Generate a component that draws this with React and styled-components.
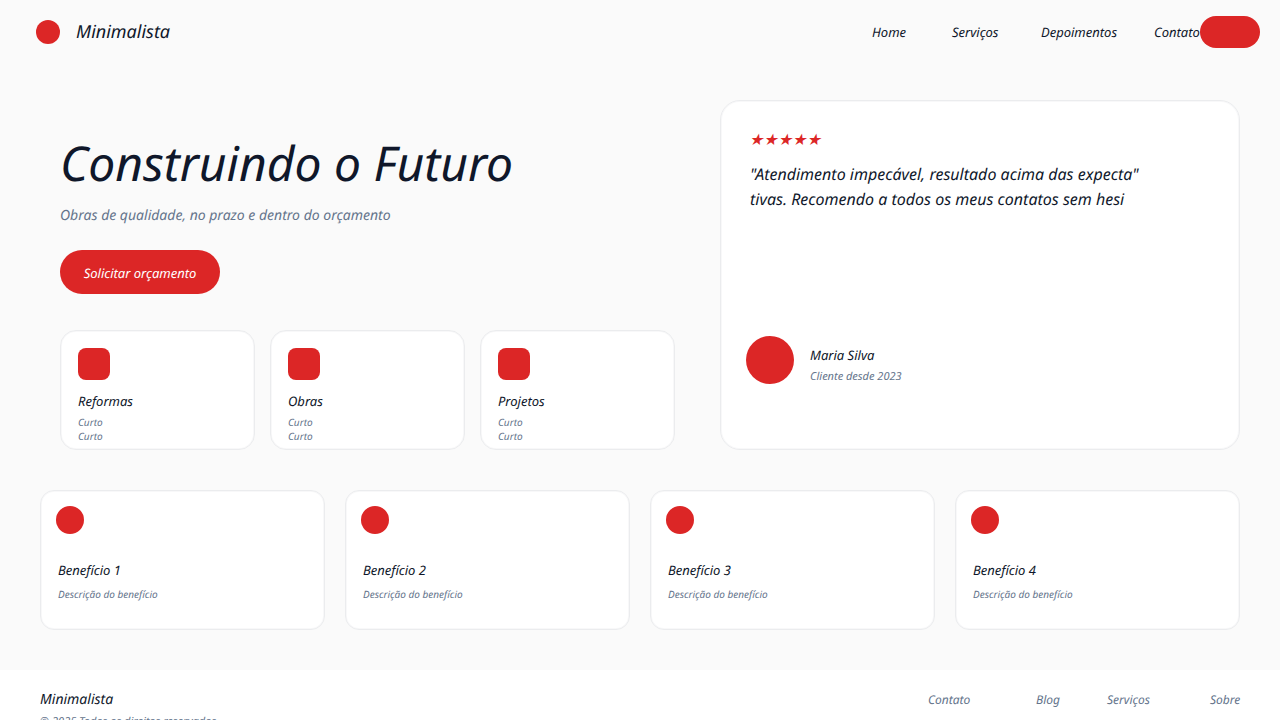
import styled, { createGlobalStyle } from 'styled-components';

const GlobalStyle = createGlobalStyle`
  * { box-sizing: border-box; }
  html, body { margin: 0; height: 720px; overflow: hidden; }
  body {
    background: #fafafa;
    color: #0f172a;
    font-family: "Noto Sans", sans-serif;
    font-style: italic;
    text-rendering: geometricPrecision;
  }
`;

const services = ['Reformas', 'Obras', 'Projetos'];
const benefits = ['Benefício 1', 'Benefício 2', 'Benefício 3', 'Benefício 4'];

const App = () => (
  <>
    <GlobalStyle />
    <Header>
      <Brand>
        <BrandDot />
        <BrandName>Minimalista</BrandName>
      </Brand>
      <Nav>
        <NavLink $width={80}>Home</NavLink>
        <NavLink $width={89}>Serviços</NavLink>
        <NavLink $width={113}>Depoimentos</NavLink>
        <NavLink $width={46}>Contato</NavLink>
        <NavButton />
      </Nav>
    </Header>
    <Hero>
      <HeroLeft>
        <Title>Construindo o Futuro</Title>
        <Subtitle>Obras de qualidade, no prazo e dentro do orçamento</Subtitle>
        <Cta>Solicitar orçamento</Cta>
        <Services>
          {services.map(name => (
            <ServiceCard key={name}>
              <ServiceIcon />
              <ServiceName>{name}</ServiceName>
              <ServiceText>Curto<br />Curto</ServiceText>
            </ServiceCard>
          ))}
        </Services>
      </HeroLeft>
      <Testimonial>
        <Stars>★★★★★</Stars>
        <Quote>"Atendimento impecável, resultado acima das expecta"<br />tivas. Recomendo a todos os meus contatos sem hesi</Quote>
        <Author>
          <Avatar />
          <AuthorInfo>
            <AuthorName>Maria Silva</AuthorName>
            <AuthorNote>Cliente desde 2023</AuthorNote>
          </AuthorInfo>
        </Author>
      </Testimonial>
    </Hero>
    <Benefits>
      {benefits.map(name => (
        <BenefitCard key={name}>
          <BenefitDot />
          <BenefitName>{name}</BenefitName>
          <BenefitText>Descrição do benefício</BenefitText>
        </BenefitCard>
      ))}
    </Benefits>
    <Footer>
      <div>
        <FooterBrand>Minimalista</FooterBrand>
        <Copyright>© 2025 Todos os direitos reservados</Copyright>
      </div>
      <FooterNav>
        <FooterLink $width={108}>Contato</FooterLink>
        <FooterLink $width={71}>Blog</FooterLink>
        <FooterLink $width={103}>Serviços</FooterLink>
        <FooterLink $width={30}>Sobre</FooterLink>
      </FooterNav>
    </Footer>
  </>
);

export default App;

const Header = styled.header`
  height: 64px;
  padding: 0 20px 0 36px;
  display: flex;
  align-items: center;
  justify-content: space-between;
`;

const Brand = styled.div`
  display: flex;
  align-items: center;
  gap: 16px;
`;

const BrandDot = styled.div`
  width: 24px;
  height: 24px;
  border-radius: 50%;
  background: #dc2626;
`;

const BrandName = styled.span`
  font-size: 18px;
`;

const Nav = styled.nav`
  display: flex;
  align-items: center;
`;

const NavLink = styled.a`
  width: ${p => p.$width}px;
  font-size: 13px;
`;

const NavButton = styled.button`
  width: 60px;
  height: 32px;
  border: none;
  border-radius: 16px;
  background: #dc2626;
`;

const Hero = styled.section`
  height: 386px;
  padding: 36px 40px 0;
  display: flex;
  justify-content: space-between;
`;

const HeroLeft = styled.div`
  width: 636px;
  padding: 0 0 0 20px;
`;

const Title = styled.h1`
  margin: 31px 0 0;
  font-size: 48px;
  font-weight: 400;
  line-height: 66px;
`;

const Subtitle = styled.p`
  margin: 9px 0 0;
  font-size: 14px;
  line-height: 20px;
  color: #64748b;
`;

const Cta = styled.button`
  display: block;
  margin-top: 24px;
  padding-top: 2px;
  width: 160px;
  height: 44px;
  border: none;
  border-radius: 22px;
  background: #dc2626;
  color: #fff;
  font: italic 13px "Noto Sans", sans-serif;
  text-rendering: geometricPrecision;
`;

const Services = styled.div`
  margin-top: 36px;
  display: flex;
  gap: 15px;
`;

const ServiceCard = styled.div`
  width: 195px;
  height: 120px;
  padding: 17px 17px 0;
  background: #fff;
  border: 1px solid #ebecee;
  box-shadow: inset 0 0 0 1px #f8f8f9;
  border-radius: 16px;
`;

const ServiceIcon = styled.div`
  width: 32px;
  height: 32px;
  border-radius: 8px;
  background: #dc2626;
`;

const ServiceName = styled.div`
  margin-top: 12px;
  font-size: 13px;
  line-height: 18px;
`;

const ServiceText = styled.div`
  margin-top: 5px;
  font-size: 10px;
  line-height: 14px;
  color: #64748b;
`;

const Testimonial = styled.aside`
  width: 520px;
  height: 350px;
  padding: 28px 29px 0;
  background: #fff;
  border: 1px solid #ebecee;
  box-shadow: inset 0 0 0 1px #f8f8f9;
  border-radius: 20px;
`;

const Stars = styled.div`
  margin-left: -1px;
  color: #dc2626;
  font-size: 16px;
  line-height: 20px;
`;

const Quote = styled.p`
  margin: 13px 0 0;
  font-size: 16px;
  line-height: 25px;
`;

const Author = styled.div`
  margin: 124px 0 0 -4px;
  display: flex;
  align-items: flex-start;
  gap: 16px;
`;

const Avatar = styled.div`
  width: 48px;
  height: 48px;
  border-radius: 50%;
  background: #dc2626;
`;

const AuthorInfo = styled.div`
  padding-top: 9px;
`;

const AuthorName = styled.div`
  font-size: 13px;
  line-height: 20px;
`;

const AuthorNote = styled.div`
  margin-top: 4px;
  font-size: 11px;
  line-height: 16px;
  color: #64748b;
`;

const Benefits = styled.section`
  padding: 40px 40px 0;
  height: 220px;
  display: grid;
  grid-template-columns: repeat(4, 1fr);
  gap: 20px;
`;

const BenefitCard = styled.div`
  height: 140px;
  padding: 15px;
  background: #fff;
  border: 1px solid #ebecee;
  box-shadow: inset 0 0 0 1px #f8f8f9;
  border-radius: 14px;
`;

const BenefitDot = styled.div`
  width: 28px;
  height: 28px;
  border-radius: 50%;
  background: #dc2626;
`;

const BenefitName = styled.div`
  margin: 27px 0 0 2px;
  font-size: 13px;
  line-height: 18px;
`;

const BenefitText = styled.div`
  margin: 8px 0 0 2px;
  font-size: 10px;
  line-height: 14px;
  color: #64748b;
`;

const Footer = styled.footer`
  height: 50px;
  padding: 20px 40px 0;
  background: #fff;
  display: flex;
  justify-content: space-between;
  overflow: hidden;
`;

const FooterBrand = styled.div`
  margin-top: 1px;
  font-size: 14px;
  line-height: 18px;
`;

const Copyright = styled.div`
  margin-top: 5px;
  font-size: 11px;
  line-height: 15px;
  color: #64748b;
`;

const FooterNav = styled.nav`
  display: flex;
  align-items: flex-start;
  justify-content: flex-end;
`;

const FooterLink = styled.a`
  width: ${p => p.$width}px;
  font-size: 12px;
  line-height: 20px;
  color: #64748b;
`;
